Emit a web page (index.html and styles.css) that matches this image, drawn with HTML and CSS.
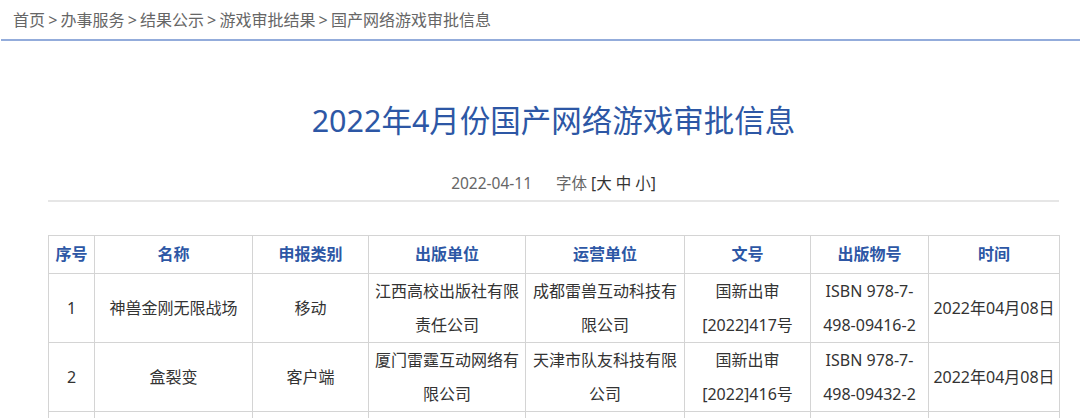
FILE: index.html
```html
<!DOCTYPE html>
<html lang="zh-CN">
<head>
<meta charset="utf-8">
<title>2022年4月份国产网络游戏审批信息</title>
<link rel="stylesheet" href="styles.css">
</head>
<body>
<div class="crumb">首页 &gt; 办事服务 &gt; 结果公示 &gt; 游戏审批结果 &gt; 国产网络游戏审批信息</div>
<div class="main">
  <h1 class="title">2022年4月份国产网络游戏审批信息</h1>
  <div class="meta"><span class="date">2022-04-11</span><span class="font">字体 <span class="sizes">[大 中 小]</span></span></div>
  <table class="list">
    <colgroup>
      <col class="c1"><col class="c2"><col class="c3"><col class="c4"><col class="c5"><col class="c6"><col class="c7"><col class="c8">
    </colgroup>
    <thead>
      <tr><th>序号</th><th>名称</th><th>申报类别</th><th>出版单位</th><th>运营单位</th><th>文号</th><th>出版物号</th><th>时间</th></tr>
    </thead>
    <tbody>
      <tr><td>1</td><td>神兽金刚无限战场</td><td>移动</td><td>江西高校出版社有限责任公司</td><td>成都雷兽互动科技有限公司</td><td>国新出审[2022]417号</td><td>ISBN 978-7-498-09416-2</td><td>2022年04月08日</td></tr>
      <tr><td>2</td><td>盒裂变</td><td>客户端</td><td>厦门雷霆互动网络有限公司</td><td>天津市队友科技有限公司</td><td>国新出审[2022]416号</td><td>ISBN 978-7-498-09432-2</td><td>2022年04月08日</td></tr>
      <tr class="more"><td></td><td></td><td></td><td></td><td></td><td></td><td></td><td></td></tr>
    </tbody>
  </table>
</div>
</body>
</html>
```
FILE: styles.css
```css
html, body { margin: 0; padding: 0; background: #fff; }
body {
  font-family: "Noto Sans", "Noto Sans CJK SC", sans-serif;
  color: #333;
  overflow: hidden;
}
.crumb {
  height: 39px;
  line-height: 40px;
  padding-left: 12px;
  font-size: 16px;
  color: #666;
  border-bottom: 2px solid #93acdb;
  margin-left: 1px;
  word-spacing: -1px;
}
.main {
  margin-left: 48px;
  width: 1011px;
}
.title {
  margin: 59px 0 0;
  font-size: 30.5px;
  line-height: 40px;
  font-weight: normal;
  color: #2d57a5;
  text-align: center;
}
.meta {
  margin-top: 33px;
  font-size: 15.5px;
  line-height: 20px;
  color: #666;
  text-align: center;
  padding-bottom: 7px;
  border-bottom: 2px solid #e6e6e6;
}
.date { margin-right: 24px; }
.sizes { color: #333; }
.list {
  margin-top: 33px;
  width: 1011px;
  table-layout: fixed;
  border-collapse: collapse;
  font-size: 16px;
}
.c1 { width: 46px; }
.c2 { width: 158px; }
.c3 { width: 116px; }
.c4 { width: 157px; }
.c5 { width: 159px; }
.c6 { width: 126px; }
.c7 { width: 118px; }
.c8 { width: 131px; }
.list th, .list td {
  border: 1px solid #d4d4d4;
  text-align: center;
  vertical-align: middle;
  padding: 0 4px;
}
.list th {
  height: 37px;
  line-height: 37px;
  color: #2d57a5;
  font-weight: bold;
}
.list td {
  line-height: 34px;
  color: #333;
}
.list td:nth-child(1) { padding: 0; }
.list td:nth-child(8) { padding: 0; }
.list .more td { height: 68px; }
```
